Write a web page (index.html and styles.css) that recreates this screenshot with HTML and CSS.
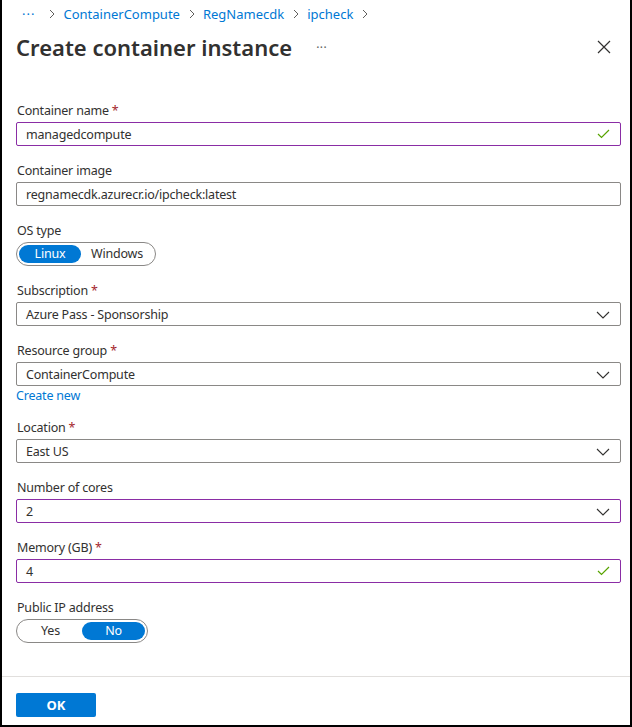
FILE: index.html
```html
<!DOCTYPE html>
<html lang="en">
<head>
<meta charset="utf-8">
<title>Create container instance</title>
<link rel="stylesheet" href="styles.css">
</head>
<body>
<div class="blade">
  <nav class="crumbs">
    <span class="crumb-more">···</span>
    <span class="sep"><svg width="6" height="10" viewBox="0 0 6 10"><path d="M1 1 L5 5 L1 9" fill="none" stroke="#605e5c" stroke-width="1"/></svg></span>
    <a class="crumb">ContainerCompute</a>
    <span class="sep"><svg width="6" height="10" viewBox="0 0 6 10"><path d="M1 1 L5 5 L1 9" fill="none" stroke="#605e5c" stroke-width="1"/></svg></span>
    <a class="crumb">RegNamecdk</a>
    <span class="sep"><svg width="6" height="10" viewBox="0 0 6 10"><path d="M1 1 L5 5 L1 9" fill="none" stroke="#605e5c" stroke-width="1"/></svg></span>
    <a class="crumb">ipcheck</a>
    <span class="sep"><svg width="6" height="10" viewBox="0 0 6 10"><path d="M1 1 L5 5 L1 9" fill="none" stroke="#605e5c" stroke-width="1"/></svg></span>
  </nav>
  <header class="head">
    <h1 class="title">Create container instance</h1>
    <span class="title-more">···</span>
    <span class="spacer"></span>
    <button class="close" aria-label="Close"><svg width="14" height="14" viewBox="0 0 14 14"><path d="M1 1 L13 13 M13 1 L1 13" stroke="#323130" stroke-width="1.2" fill="none"/></svg></button>
  </header>
  <main class="form">
    <div class="field">
      <label class="label">Container name <span class="req">*</span></label>
      <div class="input dirty"><span class="value">managedcompute</span><svg class="check" width="13" height="10" viewBox="0 0 13 10"><path d="M1 5 L4.5 8.5 L12 1" fill="none" stroke="#57a300" stroke-width="1.2"/></svg></div>
    </div>
    <div class="field">
      <label class="label">Container image</label>
      <div class="input"><span class="value">regnamecdk.azurecr.io/ipcheck:latest</span></div>
    </div>
    <div class="field">
      <label class="label">OS type</label>
      <div class="toggle">
        <span class="seg on">Linux</span><span class="seg">Windows</span>
      </div>
    </div>
    <div class="field">
      <label class="label">Subscription <span class="req">*</span></label>
      <div class="input"><span class="value">Azure Pass - Sponsorship</span><svg class="chev" width="14" height="8" viewBox="0 0 14 8"><path d="M1 1 L7 7 L13 1" fill="none" stroke="#323130" stroke-width="1.1"/></svg></div>
    </div>
    <div class="field">
      <label class="label">Resource group <span class="req">*</span></label>
      <div class="input"><span class="value">ContainerCompute</span><svg class="chev" width="14" height="8" viewBox="0 0 14 8"><path d="M1 1 L7 7 L13 1" fill="none" stroke="#323130" stroke-width="1.1"/></svg></div>
      <a class="link">Create new</a>
    </div>
    <div class="field">
      <label class="label">Location <span class="req">*</span></label>
      <div class="input"><span class="value">East US</span><svg class="chev" width="14" height="8" viewBox="0 0 14 8"><path d="M1 1 L7 7 L13 1" fill="none" stroke="#323130" stroke-width="1.1"/></svg></div>
    </div>
    <div class="field">
      <label class="label">Number of cores</label>
      <div class="input dirty"><span class="value">2</span><svg class="chev" width="14" height="8" viewBox="0 0 14 8"><path d="M1 1 L7 7 L13 1" fill="none" stroke="#323130" stroke-width="1.1"/></svg></div>
    </div>
    <div class="field">
      <label class="label">Memory (GB) <span class="req">*</span></label>
      <div class="input dirty"><span class="value">4</span><svg class="check" width="13" height="10" viewBox="0 0 13 10"><path d="M1 5 L4.5 8.5 L12 1" fill="none" stroke="#57a300" stroke-width="1.2"/></svg></div>
    </div>
    <div class="field">
      <label class="label">Public IP address</label>
      <div class="toggle wide">
        <span class="seg">Yes</span><span class="seg on">No</span>
      </div>
    </div>
  </main>
  <footer class="foot">
    <button class="ok">OK</button>
  </footer>
</div>
</body>
</html>
```
FILE: styles.css
```css
* { box-sizing: border-box; }
html, body { margin: 0; padding: 0; background: #fff; }
body {
  font-family: "Noto Sans", "Open Sans", sans-serif;
  font-size: 12.5px;
  letter-spacing: -0.2px;
  color: #323130;
}
.blade {
  width: 632px;
  height: 727px;
  border: 2px solid #000;
  border-top: none;
  display: flex;
  flex-direction: column;
  overflow: hidden;
}
.crumbs {
  height: 28px;
  display: flex;
  align-items: center;
  padding-left: 20px;
  font-size: 13px;
  letter-spacing: 0;
  color: #0078d4;
}
.crumb-more { letter-spacing: 1px; margin-right: 5px; }
.crumb { color: #0078d4; text-decoration: none; }
.sep { display: flex; align-items: center; margin: 0 8px 0 9px; }
.head {
  height: 38px;
  display: flex;
  align-items: center;
  padding: 0 19px 0 14px;
}
.title {
  margin: 0;
  font-size: 22px;
  font-weight: 600;
  letter-spacing: 0;
  line-height: 32px;
  color: #323130;
}
.title-more { margin-left: 24px; color: #605e5c; font-size: 12px; letter-spacing: 0.5px; }
.spacer { flex: 1; }
.close { border: 0; background: none; padding: 0; display: flex; }
.form {
  flex: 1;
  padding: 35px 9px 0 14px;
}
.field { margin-bottom: 15px; }
.label {
  display: block;
  height: 18px;
  line-height: 19px;
  margin-bottom: 3px;
  padding-left: 1px;
}
.req { color: #a4262c; }
.input {
  height: 24px;
  border: 1px solid #8a8886;
  border-radius: 2px;
  display: flex;
  align-items: center;
  padding: 0 10px 0 9px;
}
.input.dirty { border-color: #8a2da5; }
.value { flex: 1; white-space: nowrap; }
.chev { margin-top: 1px; }
.check { margin-top: -1px; }
.link {
  display: block;
  height: 17px;
  line-height: 19px;
  color: #0078d4;
  margin-top: 0;
}
.toggle {
  display: inline-flex;
  height: 24px;
  border: 1px solid #8a8886;
  border-radius: 12px;
  padding: 2px;
}
.seg {
  min-width: 62px;
  padding: 0 10px;
  text-align: center;
  line-height: 18px;
  border-radius: 9px;
}
.toggle.wide .seg { min-width: 63px; }
.seg.on { background: #0078d4; color: #fff; }
.foot {
  height: 49px;
  border-top: 1px solid #e1dfdd;
  padding: 16px 0 8px 14px;
}
.ok {
  width: 80px;
  height: 24px;
  background: #0078d4;
  color: #fff;
  border: 0;
  border-radius: 2px;
  font-family: inherit;
  font-size: 13px;
  font-weight: 700;
}
```
